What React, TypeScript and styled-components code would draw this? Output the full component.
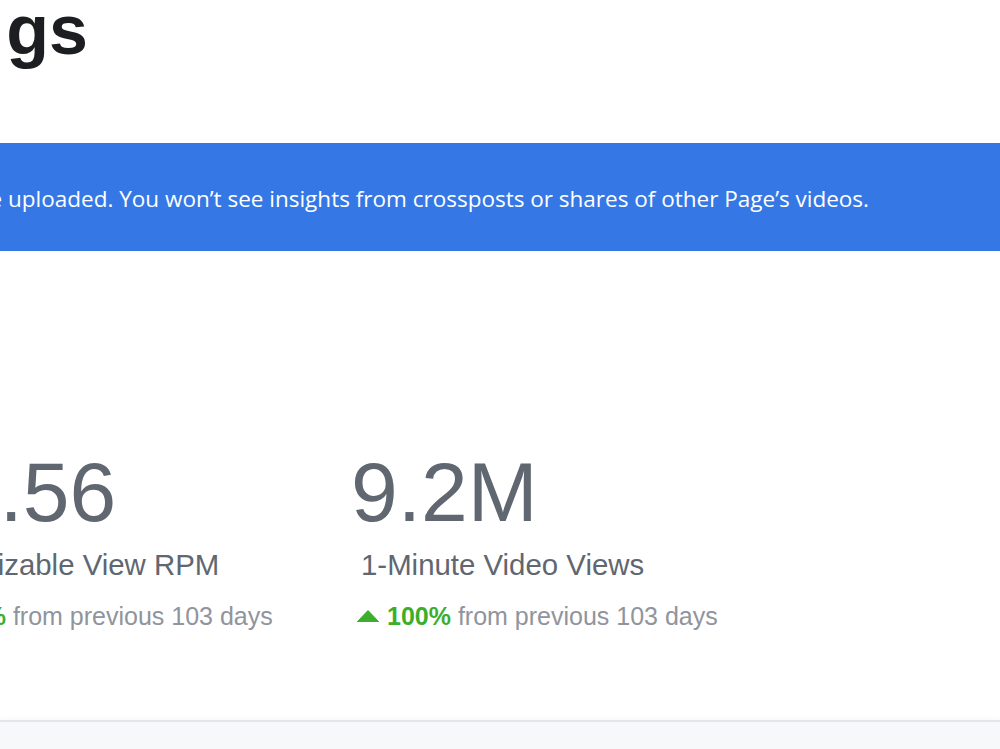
import React from "react";
import styled, { createGlobalStyle } from "styled-components";

const GlobalStyle = createGlobalStyle`
  html, body {
    margin: 0;
    padding: 0;
    background: #ffffff;
  }
  body {
    font-family: "Liberation Sans", Arial, sans-serif;
    overflow: hidden;
  }
`;

const Page = styled.div`
  width: 1000px;
  height: 749px;
  overflow: hidden;
  display: flex;
  flex-direction: column;
  background: #ffffff;
`;

const TitleRow = styled.div`
  width: 84px;
  margin-left: 4px;
  overflow: hidden;
  display: flex;
  justify-content: flex-end;
  margin-top: -12px;
`;

const Title = styled.h1`
  margin: 0;
  font-family: "Liberation Sans", Arial, sans-serif;
  font-weight: 700;
  font-size: 70px;
  line-height: 84px;
  color: #1c1e21;
  white-space: nowrap;
`;

const Notice = styled.div`
  margin-top: 71px;
  height: 108px;
  background: #3578e5;
  display: flex;
  align-items: center;
`;

const NoticeTextWrap = styled.div`
  width: 869px;
  display: flex;
  justify-content: flex-end;
  padding-top: 3px;
`;

const NoticeText = styled.span`
  font-family: "Open Sans", "Noto Sans", sans-serif;
  font-size: 22.5px;
  color: #ffffff;
  white-space: nowrap;
`;

const Metrics = styled.div`
  margin-top: 199px;
  margin-left: -96px;
  display: grid;
  grid-template-columns: repeat(3, 445px);
`;

const Metric = styled.div`
  display: flex;
  flex-direction: column;
`;

const Value = styled.div`
  padding-left: 2px;
  font-size: 84px;
  line-height: 84px;
  color: #606770;
  white-space: nowrap;
`;

const Label = styled.div`
  margin-top: 13px;
  padding-left: 12px;
  font-size: 29.4px;
  line-height: 35px;
  color: #606770;
  white-space: nowrap;
`;

const Change = styled.div`
  margin-top: 19px;
  padding-left: 8px;
  display: flex;
  align-items: center;
  gap: 8px;
  font-size: 25px;
  line-height: 30px;
  color: #90949c;
  white-space: nowrap;
`;

const Percent = styled.strong`
  color: #3bae2c;
  font-weight: 700;
`;

const Footer = styled.div`
  margin-top: auto;
  height: 27px;
  border-top: 2px solid #e3e5e8;
  background: #f7f8fa;
  box-shadow: 0 -3px 3px rgba(0, 0, 0, 0.02);
`;

const UpArrow = () => (
  <svg width="22" height="12" viewBox="0 0 22 12" aria-hidden="true">
    <path d="M11 0.5 L21.5 11.5 L0.5 11.5 Z" fill="#3bae2c" strokeLinejoin="round" stroke="#3bae2c" strokeWidth="1" />
  </svg>
);

type MetricData = { value: string; label: string; pct: string };

const metrics: MetricData[] = [
  { value: "$2.56", label: "Monetizable View RPM", pct: "100%" },
  { value: "9.2M", label: "1-Minute Video Views", pct: "100%" },
];

export default function App() {
  return (
    <>
      <GlobalStyle />
      <Page>
        <TitleRow>
          <Title>Earnings</Title>
        </TitleRow>
        <Notice>
          <NoticeTextWrap>
            <NoticeText>
              Insights are only available for videos your Page uploaded. You won’t see insights from crossposts or shares of other Page’s videos.
            </NoticeText>
          </NoticeTextWrap>
        </Notice>
        <Metrics>
          {metrics.map((m) => (
            <Metric key={m.label}>
              <Value>{m.value}</Value>
              <Label>{m.label}</Label>
              <Change>
                <UpArrow />
                <span>
                  <Percent>{m.pct}</Percent> from previous 103 days
                </span>
              </Change>
            </Metric>
          ))}
        </Metrics>
        <Footer />
      </Page>
    </>
  );
}
